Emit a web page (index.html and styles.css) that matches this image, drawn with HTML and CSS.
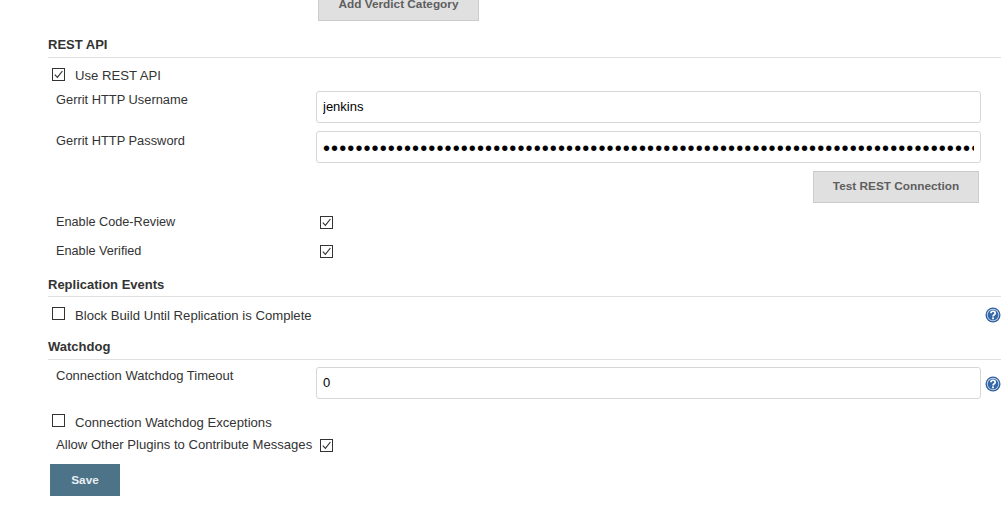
FILE: index.html
```html
<!DOCTYPE html>
<html lang="en">
<head>
    <meta charset="UTF-8">
    <title>Gerrit Trigger Server Configuration</title>
    <link rel="stylesheet" href="styles.css">
</head>
<body>
    <svg class="defs" width="0" height="0">
        <symbol id="check" viewBox="0 0 13 13">
            <path d="M2.8 6.6 L5.4 9.4 L10.4 3" fill="none" stroke="#333" stroke-width="1.2"/>
        </symbol>
        <symbol id="help" viewBox="0 0 16 16">
            <circle cx="8" cy="8" r="7.5" fill="#2f5f9e"/>
            <circle cx="8" cy="8" r="6.2" fill="#c5d5e8"/>
            <circle cx="8" cy="8" r="5.3" fill="#3568a8"/>
            <path d="M5.9 6.2 C5.9 3.6 10.2 3.6 10.2 6.2 C10.2 7.8 8 7.8 8 9.6" fill="none" stroke="#fff" stroke-width="1.7"/>
            <rect x="7.1" y="10.4" width="1.8" height="1.8" fill="#fff"/>
        </symbol>
    </svg>

    <div class="container">
        <div class="top-action">
            <button class="btn">Add Verdict Category</button>
        </div>

        <h2 class="section-title rest-title">REST API</h2>
        <div class="check-row use-rest">
            <span class="check-box"><svg><use href="#check"/></svg></span>
            <span>Use REST API</span>
        </div>
        <div class="field-row username-row">
            <label>Gerrit HTTP Username</label>
            <input class="text-input" type="text" value="jenkins">
        </div>
        <div class="field-row password-row">
            <label>Gerrit HTTP Password</label>
            <input class="text-input password" type="password" value="aaaaaaaaaaaaaaaaaaaaaaaaaaaaaaaaaaaaaaaaaaaaaaaaaaaaaaaaaaaaaaaaaaaaaaaaaaaaaaaaaaaaaaaaaaaaaaaa">
        </div>
        <div class="test-action">
            <button class="btn test-btn">Test REST Connection</button>
        </div>
        <div class="option-row code-review">
            <label>Enable Code-Review</label>
            <span class="check-box"><svg><use href="#check"/></svg></span>
        </div>
        <div class="option-row verified">
            <label>Enable Verified</label>
            <span class="check-box"><svg><use href="#check"/></svg></span>
        </div>

        <h2 class="section-title replication-title">Replication Events</h2>
        <div class="check-row block-build">
            <span class="check-box"></span>
            <span>Block Build Until Replication is Complete</span>
            <svg class="help-icon"><use href="#help"/></svg>
        </div>

        <h2 class="section-title watchdog-title">Watchdog</h2>
        <div class="field-row timeout-row">
            <label>Connection Watchdog Timeout</label>
            <input class="text-input" type="text" value="0">
            <svg class="help-icon"><use href="#help"/></svg>
        </div>
        <div class="check-row exceptions">
            <span class="check-box"></span>
            <span>Connection Watchdog Exceptions</span>
        </div>
        <div class="allow-row">
            <label>Allow Other Plugins to Contribute Messages</label>
            <span class="check-box"><svg><use href="#check"/></svg></span>
        </div>
        <button class="btn save-btn">Save</button>
    </div>
</body>
</html>
```

FILE: styles.css
```css
* {
    margin: 0;
    padding: 0;
    box-sizing: border-box;
}

body {
    font-family: 'Liberation Sans', Arial, sans-serif;
    font-size: 13px;
    color: #333;
    background: #fff;
    overflow: hidden;
}

.defs {
    position: absolute;
}

.container {
    width: 1001px;
    padding-left: 48px;
}

.btn {
    font-family: inherit;
    font-size: 11.8px;
    font-weight: 700;
    color: #5e5e5e;
    background: #e0e0e0;
    border: 1px solid #ccc;
    height: 32px;
    padding-bottom: 2px;
}

.top-action {
    margin-top: -11px;
    padding-left: 270px;
}

.top-action .btn {
    width: 161px;
    padding-bottom: 3px;
}

.section-title {
    font-size: 13px;
    font-weight: 700;
    color: #333;
    line-height: 15px;
    padding-bottom: 5px;
    border-bottom: 1px solid #e0e0e0;
}

.rest-title {
    margin-top: 16px;
}

.replication-title {
    margin-top: 18px;
    padding-bottom: 4px;
}

.watchdog-title {
    margin-top: 18px;
}

.check-row {
    display: flex;
    align-items: center;
    height: 16px;
    padding-left: 4px;
}

.check-row > span:nth-child(2) {
    margin-left: 10px;
    position: relative;
    top: 2px;
    font-size: 13.15px;
}

.use-rest > span:nth-child(2) {
    top: 1px;
}

.check-box {
    display: block;
    width: 13px;
    height: 13px;
    border: 1px solid #333;
    background: #fff;
    flex: none;
}

.check-box svg {
    display: block;
    width: 13px;
    height: 13px;
    margin: -1px;
}

.field-row {
    display: flex;
    align-items: flex-start;
    padding-left: 8px;
}

.field-row label {
    width: 260px;
    flex: none;
    line-height: 14px;
    padding-top: 2px;
}

.username-row label,
.password-row label {
    font-size: 12.85px;
}

.password-row label {
    padding-top: 3px;
}

.text-input {
    width: 665px;
    height: 32px;
    padding: 0 6px 2px;
    border: 1.5px solid #d6d6d6;
    border-radius: 3px;
    font-family: inherit;
    font-size: 13px;
    color: #000;
    outline: none;
}

.password {
    font-size: 20px;
    letter-spacing: 1.1px;
    padding: 3px 6px 0;
}

.help-icon {
    width: 16px;
    height: 16px;
    flex: none;
}

.use-rest {
    margin-top: 8px;
}

.username-row {
    margin-top: 9px;
}

.password-row {
    margin-top: 8px;
}

.test-action {
    margin-top: 8px;
    padding-left: 765px;
}

.test-btn {
    width: 166px;
}

.option-row {
    display: flex;
    align-items: center;
    padding-left: 8px;
    height: 16px;
}

.option-row label {
    width: 264px;
    font-size: 12.7px;
    padding-bottom: 1px;
}

.code-review {
    margin-top: 11px;
}

.verified {
    margin-top: 13px;
}

.block-build {
    margin-top: 8px;
}

.block-build .help-icon {
    margin-left: auto;
    margin-top: 3px;
}

.timeout-row {
    margin-top: 7px;
}

.timeout-row .help-icon {
    margin-left: 4px;
    margin-top: 9px;
}

.exceptions {
    margin-top: 13px;
}

.allow-row {
    display: flex;
    align-items: center;
    height: 16px;
    margin-top: 8px;
    padding-left: 8px;
    font-size: 13.1px;
}

.allow-row .check-box {
    margin: 2px 0 0 8px;
}

.save-btn {
    display: block;
    width: 70px;
    margin: 12px 0 0 2px;
    padding-bottom: 0;
    background: #4d7389;
    border-color: #4d7389;
    color: #e8eef2;
}
```
